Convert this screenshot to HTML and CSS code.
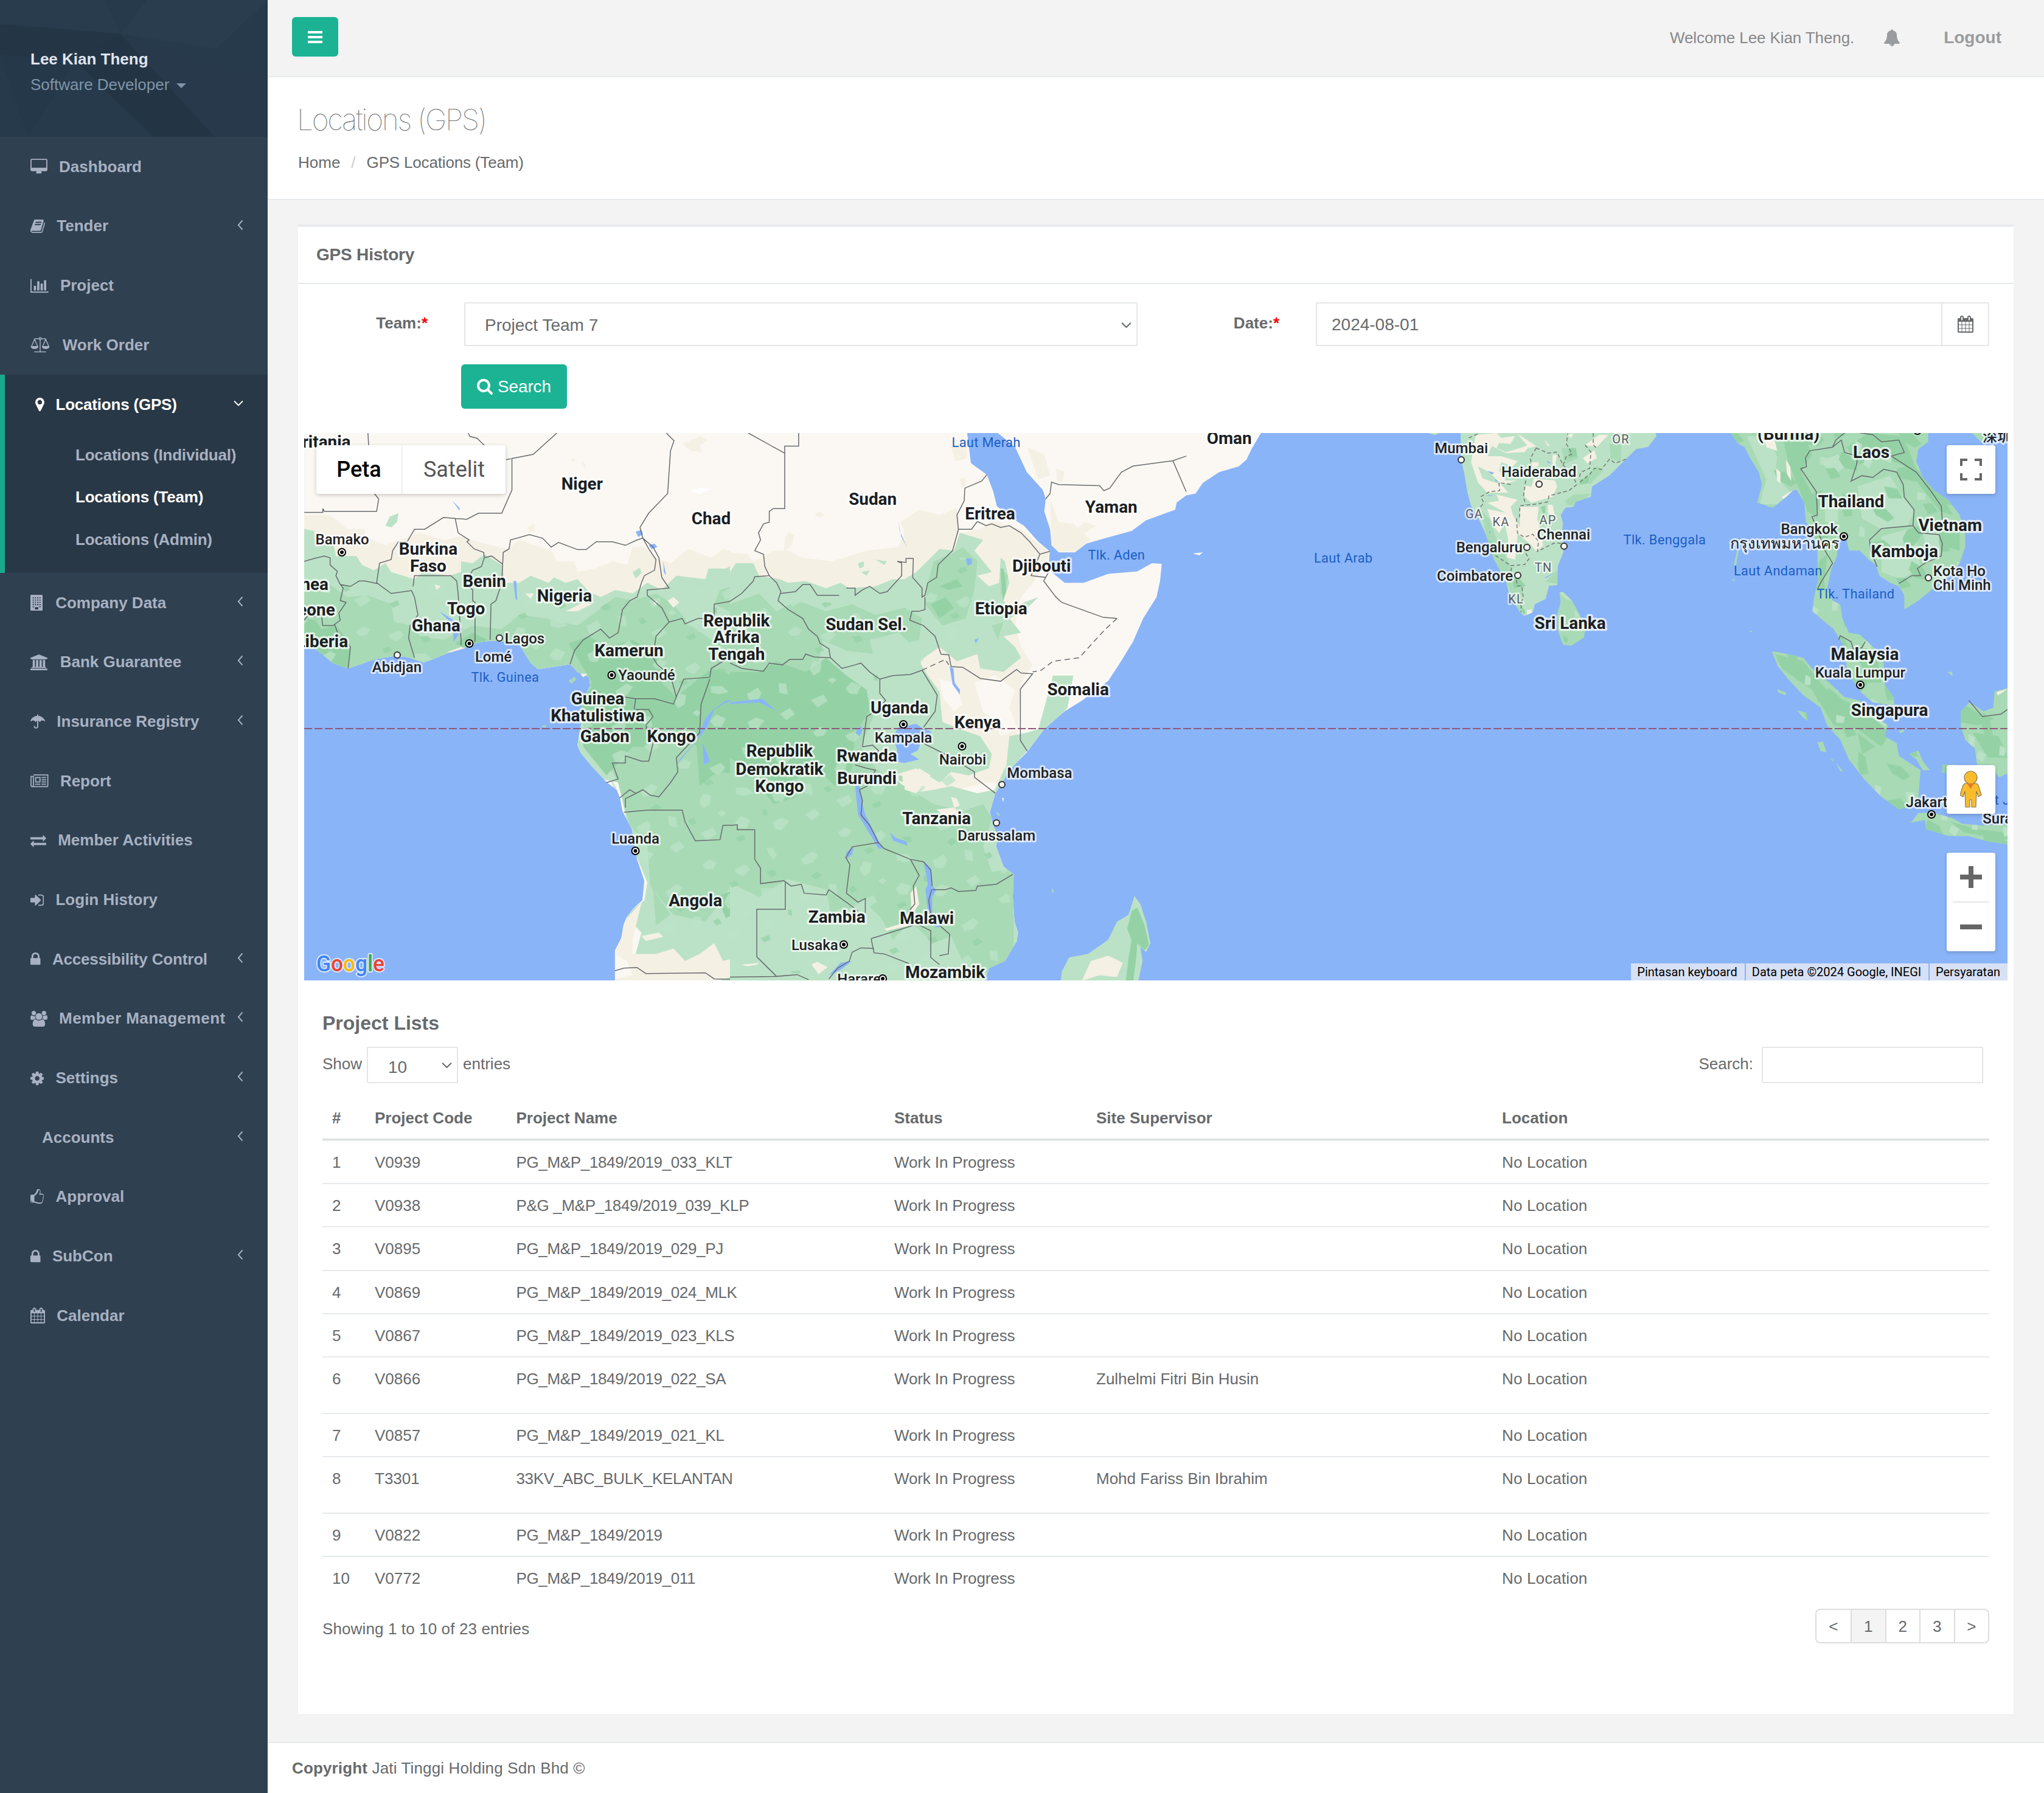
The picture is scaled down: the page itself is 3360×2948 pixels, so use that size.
FILE: index.html
```html
<!DOCTYPE html>
<html lang="en">
<head>
<meta charset="utf-8">
<title>Locations (GPS)</title>
<link rel="stylesheet" href="styles.css">
</head>
<body>
<svg class="defs" width="0" height="0" aria-hidden="true">
  <symbol id="i-lock" viewBox="320 0 1152 1792"><path d="M640 768h512v-192q0-106-75-181t-181-75-181 75-75 181v192zm832 96v576q0 40-28 68t-68 28h-960q-40 0-68-28t-28-68v-576q0-40 28-68t68-28h32v-192q0-184 132-316t316-132 316 132 132 316v192h32q40 0 68 28t28 68z"/></symbol>
  <symbol id="i-calendar" viewBox="64 0 1664 1792"><path d="M192 1664h288v-288h-288v288zm352 0h320v-288h-320v288zm-352-352h288v-320h-288v320zm352 0h320v-320h-320v320zm-352-384h288v-288h-288v288zm736 736h320v-288h-320v288zm-384-736h320v-288h-320v288zm768 736h288v-288h-288v288zm-384-352h320v-320h-320v320zm-352-864v-288q0-13-9.500-22.500t-22.500-9.500h-64q-13 0-22.500 9.500t-9.500 22.500v288q0 13 9.500 22.500t22.500 9.500h64q13 0 22.500-9.500t9.500-22.500zm736 864h288v-320h-288v320zm-384-384h320v-288h-320v288zm384 0h288v-288h-288v288zm32-480v-288q0-13-9.500-22.500t-22.500-9.500h-64q-13 0-22.500 9.500t-9.500 22.500v288q0 13 9.500 22.500t22.500 9.500h64q13 0 22.500-9.500t9.500-22.500zm384-64v1280q0 52-38 90t-90 38h-1408q-52 0-90-38t-38-90v-1280q0-52 38-90t90-38h128v-96q0-66 47-113t113-47h64q66 0 113 47t47 113v96h384v-96q0-66 47-113t113-47h64q66 0 113 47t47 113v96h128q52 0 90 38t38 90z"/></symbol>
  <symbol id="i-left" viewBox="0 0 10 18"><path d="M8.500 1.500L1.800 9l6.700 7.500" fill="none" stroke="currentColor" stroke-width="1.900"/></symbol>
  <symbol id="i-down" viewBox="0 0 18 11"><path d="M1.200 1.500L9 9.300l7.800-7.800" fill="none" stroke="currentColor" stroke-width="2.200"/></symbol>
</svg>
<aside class="sidebar">
  <div class="profile">
    <svg class="profile-bg" viewBox="0 0 767 504" preserveAspectRatio="none">
      <path fill="#263a4b" d="M0 0h767v504H0z"/>
      <path fill="#283c4e" d="M0 0h300l45 125L0 85z"/><path fill="#293d4f" d="M420 0h347L620 180 345 125z"/>
      <path fill="#243646" d="M0 90l345 35-130 100L0 200z"/><path fill="#233545" d="M345 125l270 379H440L215 225z"/>
      <path fill="#27394b" d="M345 125l380 150 42-60v289h-50L615 504z"/><path fill="#25384a" d="M0 200l215 25L80 504z"/>
    </svg>
    <div class="profile-name">Lee Kian Theng</div>
    <div class="profile-role">Software Developer <i class="caret"></i></div>
  </div>
  <nav class="menu">
    <a class="item"><svg class="w28" viewBox="0 0 1920 1792"><path d="M1792 992v-832q0-13-9.500-22.500t-22.500-9.500h-1600q-13 0-22.500 9.500t-9.500 22.500v832q0 13 9.500 22.500t22.500 9.500h1600q13 0 22.500-9.500t9.500-22.500zm128-832v1088q0 66-47 113t-113 47h-544q0 37 16 77.500t32 71 16 43.500q0 26-19 45t-45 19h-512q-26 0-45-19t-19-45q0-14 16-44t32-70 16-78h-544q-66 0-113-47t-47-113v-1088q0-66 47-113t113-47h1600q66 0 113 47t47 113z"/></svg>Dashboard</a>
    <a class="item"><svg class="w24" viewBox="64 0 1664 1792"><path d="M1703 478q40 57 18 129l-275 906q-19 64-76.500 107.500t-122.500 43.500h-923q-77 0-148.500-53.500t-99.500-131.500q-24-67-2-127 0-4 3-27t4-37q1-8-3-21.500t-3-19.500q2-11 8-21t16.500-23.500 16.500-23.500q23-38 45-91.500t30-91.500q3-10 .5-30t-.5-28q3-11 17-28t17-23q21-36 42-92t25-90q1-9-2.500-32t.5-28q4-13 22-30.500t22-22.500q19-26 42.500-84.500t27.500-96.500q1-8-3-25.500t-2-26.500q2-8 9-18t18-23 17-21q8-12 16.500-30.500t15-35 16-36 19.500-32 26.500-23.500 36-11.500 47.500 5.500l-1 3q38-9 51-9h761q74 0 114 56t18 130l-274 906q-36 119-71.500 153.500t-128.500 34.500h-869q-27 0-38 15-11 16-1 43 24 70 144 70h923q29 0 56-15.500t35-41.500l300-987q7-22 5-57 38 15 59 43zm-1064 2q-4 13 2 22.500t20 9.500h608q13 0 25.500-9.500t16.500-22.500l21-64q4-13-2-22.500t-20-9.500h-608q-13 0-25.500 9.500t-16.500 22.500zm-83 256q-4 13 2 22.500t20 9.500h608q13 0 25.500-9.500t16.500-22.500l21-64q4-13-2-22.500t-20-9.500h-608q-13 0-25.500 9.500t-16.500 22.500z"/></svg>Tender<svg class="chev"><use href="#i-left"/></svg></a>
    <a class="item"><svg class="w30" viewBox="0 0 2048 1792"><path d="M640 896v512h-256v-512h256zm384-512v1024h-256v-1024h256zm1024 1152v128h-2048v-1536h128v1408h1920zm-640-896v768h-256v-768h256zm384-384v1152h-256v-1152h256z"/></svg>Project</a>
    <a class="item"><svg class="w32 gap2" viewBox="0 0 32 27"><g fill="none" stroke="currentColor" stroke-width="1.500"><path d="M16 3v22M6 25.500h20M6 3.200h8M18 3.200h8M6.500 4L1.500 15.500M6.500 4l5 11.500M25.500 4l-5 11.500M25.500 4l5 11.500"/><circle cx="16" cy="2.800" r="1.800"/></g><path d="M0 15.500h13c0 3.500-3 5-6.500 5S0 19 0 15.500zM19 15.500h13c0 3.500-3 5-6.500 5s-6.500-1.500-6.500-5z"/></svg>Work Order</a>
    <div class="active">
      <a class="item"><svg class="w15" viewBox="384 0 1024 1792"><path d="M1152 640q0-106-75-181t-181-75-181 75-75 181 75 181 181 75 181-75 75-181zm256 0q0 109-33 179l-364 774q-16 33-47.500 52t-67.500 19-67.500-19-46.500-52l-365-774q-33-70-33-179 0-212 150-362t362-150 362 150 150 362z"/></svg>Locations (GPS)<svg class="chev-down"><use href="#i-down"/></svg></a>
      <a class="sub">Locations (Individual)</a>
      <a class="sub on">Locations (Team)</a>
      <a class="sub">Locations (Admin)</a>
    </div>
    <a class="item"><svg class="w20 gap2" viewBox="0 0 20.500 26"><path fill-rule="evenodd" d="M1 0h18.500a1 1 0 0 1 1 1v24a1 1 0 0 1-1 1H1a1 1 0 0 1-1-1V1a1 1 0 0 1 1-1zM3.700 4v1.800h2V4zm3.700 0v1.800h2V4zm3.700 0v1.800h2V4zm3.700 0v1.800h2V4zM3.700 7.700v1.800h2V7.700zm3.700 0v1.800h2V7.700zm3.700 0v1.800h2V7.700zm3.700 0v1.800h2V7.700zM3.700 11.400v1.800h2v-1.800zm3.700 0v1.800h2v-1.800zm3.700 0v1.800h2v-1.800zm3.700 0v1.800h2v-1.800zM3.700 15.100v1.800h2v-1.800zm3.700 0v1.800h2v-1.800zm3.700 0v1.800h2v-1.800zm3.700 0v1.800h2v-1.800zM3.700 18.800v1.800h2v-1.800zm11.100 0v1.800h2v-1.800zM7.400 20.300V24h5.700v-3.700z"/></svg>Company Data<svg class="chev"><use href="#i-left"/></svg></a>
    <a class="item"><svg class="w28 gap2" viewBox="0 0 1920 1792"><path d="M960 0l960 384v128h-128q0 26-20.500 45t-48.500 19h-1526q-28 0-48.500-19t-20.500-45h-128v-128zm-704 640h256v768h128v-768h256v768h128v-768h256v768h128v-768h256v768h59q28 0 48.500 19t20.500 45v64h-1664v-64q0-26 20.500-45t48.500-19h59v-768zm1595 960q28 0 48.500 19t20.500 45v128h-1920v-128q0-26 20.500-45t48.500-19h1782z"/></svg>Bank Guarantee<svg class="chev"><use href="#i-left"/></svg></a>
    <a class="item"><svg class="w24" viewBox="0 0 24 26"><path d="M11 4V2.500a1 1 0 0 1 2 0V4c5.500.4 9.800 4 11 8.600.1.500-.4.800-.8.400-2.800-2.400-5.300-2-7.200.8-.3.400-.7.400-1 0-.6-.9-1.300-1.600-2.100-1.900V21a3.700 3.700 0 0 1-7.400.3c0-1.300 1.800-1.300 1.900 0a1.800 1.800 0 0 0 3.600-.3v-9.100c-.8.300-1.500 1-2.100 1.900-.3.400-.7.400-1 0C6 11 3.600 10.600.8 13c-.4.400-.9.100-.8-.4C1.200 8 5.500 4.400 11 4z"/></svg>Insurance Registry<svg class="chev"><use href="#i-left"/></svg></a>
    <a class="item"><svg class="w30" viewBox="0 0 30 26"><g fill="none" stroke="currentColor" stroke-width="1.800"><path d="M5 3h23.900v17.500a2 2 0 0 1-2 2H3a2 2 0 0 1-2-2V5.500h4v15a2 2 0 0 1-2 2"/><path d="M8.700 7.400h7.200v7.200H8.700z"/><path d="M18.500 7.400H26M18.500 11H26M18.500 14.600H26M7.800 18.500h8.800M18.500 18.500H26"/></g></svg>Report</a>
    <a class="item"><svg class="w26" viewBox="0 0 1792 1792"><path d="M1792 1184v192q0 13-9.500 22.500t-22.500 9.500h-1376v192q0 13-9.500 22.500t-22.500 9.500q-12 0-24-10l-319-320q-9-9-9-22 0-14 9-23l320-320q9-9 23-9 13 0 22.500 9.500t9.500 22.500v192h1376q13 0 22.500 9.500t9.500 22.500zm0-544q0 14-9 23l-320 320q-9 9-23 9-13 0-22.500-9.500t-9.500-22.500v-192h-1376q-13 0-22.500-9.500t-9.500-22.500v-192q0-13 9.500-22.500t22.500-9.500h1376v-192q0-14 9-23t23-9q12 0 24 10l319 319q9 9 9 23z"/></svg>Member Activities</a>
    <a class="item"><svg class="w22" viewBox="128 0 1536 1792"><path d="M1312 896q0 26-19 45l-544 544q-19 19-45 19t-45-19-19-45v-288h-448q-26 0-45-19t-19-45v-384q0-26 19-45t45-19h448v-288q0-26 19-45t45-19 45 19l544 544q19 19 19 45zm352-352v704q0 119-84.500 203.500t-203.500 84.500h-320q-13 0-22.500-9.500t-9.500-22.500q0-4-1-20t-.5-26.500 3-23.500 10-19.500 20.500-6.500h320q66 0 113-47t47-113v-704q0-66-47-113t-113-47h-312l-11.500-1-11.500-3-8-5.500-7-9-2-13.500q0-4-1-20t-.5-26.500 3-23.500 10-19.500 20.500-6.500h320q119 0 203.500 84.500t84.500 203.500z"/></svg>Login History</a>
    <a class="item"><svg class="w17"><use href="#i-lock"/></svg><span class="snug">Accessibility Control</span><svg class="chev"><use href="#i-left"/></svg></a>
    <a class="item"><svg class="w28" viewBox="0 0 1920 1792"><path d="M593 896q-162 5-265 128h-134q-82 0-138-40.500t-56-118.500q0-353 124-353 6 0 43.500 21t97.500 42.500 119 21.500q67 0 133-23-5 37-5 66 0 159 93 293zm1071 637q0 120-73 189.500t-194 69.500h-874q-121 0-194-69.500t-73-189.500q0-53 3.500-103.500t14-109 26.500-108.500 43-97.500 62-81 85.500-53.500 111.500-20q10 0 43 21.500t73 48 107 48 135 21.500 135-21.500 107-48 73-48 43-21.500q61 0 111.500 20t85.500 53.500 62 81 43 97.500 26.500 108.500 14 109 3.500 103.500zm-1024-1277q0 106-75 181t-181 75-181-75-75-181 75-181 181-75 181 75 75 181zm704 384q0 159-112.500 271.500t-271.500 112.500-271.500-112.500-112.500-271.500 112.500-271.500 271.500-112.500 271.500 112.500 112.500 271.500zm576 225q0 78-56 118.500t-138 40.500h-134q-103-123-265-128 93-134 93-293 0-29-5-66 66 23 133 23 59 0 119-21.500t97.500-42.500 43.500-21q124 0 124 353zm-128-609q0 106-75 181t-181 75-181-75-75-181 75-181 181-75 181 75 75 181z"/></svg><span class="roomy">Member Management</span><svg class="chev"><use href="#i-left"/></svg></a>
    <a class="item"><svg class="w22" viewBox="128 0 1536 1792"><path d="M1152 896q0-106-75-181t-181-75-181 75-75 181 75 181 181 75 181-75 75-181zm512-109v222q0 12-8 23t-20 13l-185 28q-19 54-39 91 35 50 107 138 10 12 10 25t-9 23q-27 37-99 108t-94 71q-12 0-26-9l-138-108q-44 23-91 38-16 136-29 186-7 28-36 28h-222q-14 0-24.500-8.500t-11.500-21.500l-28-184q-49-16-90-37l-141 107q-10 9-25 9-14 0-25-11-126-114-165-168-7-10-7-23 0-12 8-23 15-21 51-66.500t54-70.500q-27-50-41-99l-183-27q-13-2-21-12.500t-8-23.500v-222q0-12 8-23t19-13l186-28q14-46 39-92-40-57-107-138-10-12-10-24 0-10 9-23 26-36 98.500-107.500t94.500-71.500q13 0 26 10l138 107q44-23 91-38 16-136 29-186 7-28 36-28h222q14 0 24.500 8.500t11.500 21.500l28 184q49 16 90 37l142-107q9-9 24-9 13 0 25 10 129 119 165 170 7 8 7 22 0 12-8 23-15 21-51 66.500t-54 70.500q26 50 41 98l183 28q13 2 21 12.500t8 23.500z"/></svg>Settings<svg class="chev"><use href="#i-left"/></svg></a>
    <a class="item noicon">Accounts<svg class="chev"><use href="#i-left"/></svg></a>
    <a class="item"><svg class="w22" viewBox="128 0 1536 1792"><path transform="translate(64)" d="M256 1408q0-26-19-45t-45-19-45 19-19 45 19 45 45 19 45-19 19-45zm1280-640q0-51-39-89.500t-89-38.500h-352q0-58 48-159.500t48-160.500q0-98-32-145t-128-47q-26 26-38 85t-30.500 125.500-59.500 109.500q-22 23-77 91-4 5-23 30t-31.500 41-34.500 42.500-40 44-38.500 35.500-40 27-35.500 9h-32v640h32q13 0 31.500 3t33 6.500 38 11 35 11.500 35.500 12.500 29 10.500q211 73 342 73h121q192 0 192-167 0-26-5-56 30-16 47.500-52.500t17.500-73.500-18-69q53-50 53-119 0-25-10-55.500t-25-47.500q32-1 53.500-47t21.500-81zm64-1q0 89-49 163 9 33 9 69 0 77-38 144 3 21 3 43 0 101-60 178 1 139-85 219.500t-227 80.500h-129q-96 0-189.500-22.500t-216.500-65.500q-116-40-138-40h-288q-53 0-90.500-37.500t-37.500-90.500v-640q0-53 37.500-90.500t90.500-37.500h274q36-24 137-155 58-75 107-128 24-25 35.500-85.500t30.500-126.500 62-108q39-37 90-37 84 0 151 32.500t102 101.500 35 186q0 93-48 192h176q104 0 180 76t76 179z"/></svg>Approval</a>
    <a class="item"><svg class="w17"><use href="#i-lock"/></svg>SubCon<svg class="chev"><use href="#i-left"/></svg></a>
    <a class="item"><svg class="w24"><use href="#i-calendar"/></svg>Calendar</a>
  </nav>
</aside>
<main class="page">
  <header class="topbar">
    <button class="toggle"><svg width="24" height="20"><path d="M0 0h24v4H0zM0 8h24v4H0zM0 16h24v4H0z"/></svg></button>
    <span class="welcome">Welcome Lee Kian Theng.</span>
    <svg class="bell" viewBox="64 0 1664 1792"><path d="M912 1696q0-16-16-16-59 0-101.500-42.500t-42.500-101.500q0-16-16-16t-16 16q0 73 51.500 124.500t124.500 51.500q16 0 16-16zm816-288q0 52-38 90t-90 38h-448q0 106-75 181t-181 75-181-75-75-181h-448q-52 0-90-38t-38-90q50-42 91-88t85-119.500 74.500-158.500 50-206 19.500-260q0-152 117-282.500t307-158.500q-8-19-8-39 0-40 28-68t68-28 68 28 28 68q0 20-8 39 190 28 307 158.500t117 282.500q0 139 19.500 260t50 206 74.500 158.500 85 119.500 91 88z"/></svg>
    <a class="logout">Logout</a>
  </header>
  <section class="heading">
    <h2>Locations (GPS)</h2>
    <div class="crumbs"><span>Home</span><i>/</i><span class="snug">GPS Locations (Team)</span></div>
  </section>
  <section class="content">
    <div class="card">
      <h5>GPS History</h5>
      <div class="card-body">
        <div class="form">
          <label>Team:<b>*</b></label>
          <div class="select"><span>Project Team 7</span><svg class="arrow"><use href="#i-down"/></svg></div>
          <label>Date:<b>*</b></label>
          <div class="date"><span>2024-08-01</span><i><svg><use href="#i-calendar"/></svg></i></div>
        </div>
        <button class="search"><svg viewBox="64 128 1664 1664"><path d="M1216 832q0-185-131.500-316.500t-316.500-131.500-316.500 131.500-131.500 316.500 131.500 316.500 316.500 131.500 316.500-131.500 131.500-316.500zm512 832q0 52-38 90t-90 38q-54 0-90-38l-343-342q-179 124-399 124-143 0-273.500-55.500t-225-150-150-225-55.500-273.500 55.500-273.500 150-225 225-150 273.500-55.500 273.500 55.500 225 150 150 225 55.500 273.500q0 220-124 399l343 343q37 37 37 90z"/></svg>Search</button>
        <div class="map">
          <svg class="canvas" width="2800" height="900" viewBox="0 0 2800 900">
            <defs>
              <pattern id="tex" width="230" height="170" patternUnits="userSpaceOnUse" patternTransform="rotate(-14)">
                <g fill="#bbe2c6" opacity=".75"><path d="M10 12l14-6 10 8-8 8-12-2zM60 30l20-4 6 10-14 8-8-6zM120 8l10 2 4 14-8 6-4-10zM170 40l22-8 8 8-12 10-14 0zM30 80l10-12 12 6-6 14-12 4zM95 70l18 4 8 12-16 0-12-6zM150 95l20-6 4 10-10 12-12-4zM205 90l12 4-2 18-12-6zM20 130l22-4 4 12-18 6zM80 125l12-8 14 10-10 12-12-4zM140 140l16-4 12 8-16 12-10-4zM195 140l18-6 6 12-16 6zM55 105l8-3 6 6-8 4z"/></g>
                <g fill="#94d2a5" opacity=".7"><path d="M45 50l12-2 4 8-12 2zM110 45l14 2 2 8-10 2zM180 70l12-4 6 8-12 4zM75 150l14-2 2 8-12 2zM5 105l10-2 3 9-9 2zM130 115l6 2-2 10-6-4z"/></g>
              </pattern>
              <pattern id="tex2" width="170" height="130" patternUnits="userSpaceOnUse" patternTransform="rotate(20)">
                <g fill="#94d2a5"><path d="M10 12l24-4 20 10-8 10-22-4zM80 30l16-14 10 12-6 22-14 8-8-14zM130 8l14 6 14 24-12 6-10-14zM30 70l20-12 22 8-6 14-28 4zM105 75l22 4 14 16-22 4-14-10zM20 105l22-4 14 12-22 8zM90 110l14-6 14 10-14 10z"/></g>
                <g fill="#bbe2c6"><path d="M55 45l14-4 4 10-10 8zM120 50l12 2 4 14-10 2zM75 95l14-2 2 10-12 4zM5 50l10 2 3 12-9 2zM145 70l14 2-2 14-12-4z"/></g>
              </pattern>
              <clipPath id="land6"><path d="M21 20H1568V1568H1089V1470L1111 1435 1118 1400 1130 1376 1155 1350 1183 1330 1190 1275 1165 1215 1147 1130 1115 1080 1107 1045 1095 1020 1062 1000 1010 955 970 915 960 895 972 840 975 770 1004 730 1000 705 960 690 935 668 890 674 825 682 800 665 762 615 720 605 660 602 615 608 590 618 540 628 490 645 432 664 375 648 330 645 260 655 215 668 172 680 120 665 60 625 21 620z"/></clipPath>
              <clipPath id="land7"><path d="M0 20H815L828 105 883 137 905 185 917 225 960 255 1010 280 1060 325 1099 352 1096 385 1105 410 1150 440 1215 440 1300 415 1400 408 1450 385 1484 387 1478 435 1466 480 1420 540 1385 605 1340 665 1300 715 1210 770 1150 800 1080 850 1020 915 960 965 935 1000 912 1030 893 1083 905 1120 920 1150 915 1180 940 1235 975 1257 972 1320 978 1390 990 1420 985 1445 945 1500 890 1520 870 1568H0z"/></clipPath>
              <clipPath id="land8"><path d="M525 36L528 170 540 230 555 330 570 395 600 450 635 540 665 650 720 770 735 830 780 920 800 938 835 920 845 880 890 855 905 790 940 787 943 690 965 630 970 600 960 540 965 480 955 440 975 405 1010 400 1020 375 1085 350 1090 300 1165 245 1235 165 1280 115 1330 105 1367 50 1362 36z"/></clipPath>
              <clipPath id="land9"><path d="M265 20L300 50 330 60 355 90 395 130 410 165 388 215 460 230 520 200 555 180 570 180 605 215 612 270 640 290 665 350 668 430 650 480 642 520 700 550 740 570 790 620 800 680 830 715 870 750 920 775 1020 785 1015 760 975 725 970 660 930 625 860 585 810 580 780 540 770 500 735 490 710 455 730 400 755 365 760 320 800 320 810 350 860 350 900 375 935 390 950 420 1000 440 1040 450 1065 475 1065 515 1130 490 1190 460 1260 425 1320 385 1345 340 1345 300 1320 250 1270 210 1200 180 1150 145 1120 100 1130 65 1175 45 1175 20zM455 632L500 636 600 650 640 680 720 720 790 760 860 770 920 810 990 840 975 870 1030 890 1040 925 1140 965 1130 1040 1100 1065 1040 1075 960 1040 880 990 810 935 770 880 710 840 680 790 600 755 530 710 480 670zM1095 1112L1130 1085 1200 1085 1290 1100 1330 1115 1420 1120 1540 1118V1173L1450 1165 1360 1150 1270 1150 1165 1130 1160 1105zM1540 735L1480 745 1475 790 1430 800 1365 775 1325 800 1325 840 1345 880 1390 905 1400 950 1460 950 1500 985 1540 975zM1088 920L1130 910 1150 940 1183 965 1150 965 1120 935zM1240 950h60v22h-60zM480 738L523 748 515 755 485 747zM572 797L615 805 620 827 595 815zM665 887L690 885 707 915 680 912zM752 945L782 968 770 968zM1375 20L1475 20 1420 46zM295 350L303 350 290 392 280 390zM270 432l12-4v8zM1265 690l20 0 2 12zM1040 855l22-5 2 8-20 3zM350 573l18 4-10 2zM725 930l16 8-8 2z"/></clipPath>
              <g id="cap"><circle r="6" fill="#fff" stroke="#000" stroke-width="2"/><circle r="3" fill="#000"/></g>
              <circle id="town" r="5" fill="#f4f4f4" stroke="#333" stroke-width="2"/>
            </defs>
            <rect width="2800" height="900" fill="#8ab4f8"/>
            <g transform="translate(-10 -12) scale(.47831 .58675)" class="lines">
              <g clip-path="url(#land6)">
                <path fill="#fbf8f3" d="M0 0h1600v1600H0z"/>
                <path fill="#f5f0e4" d="M0 250L110 250 170 290 230 290 230 310 300 335 420 300 500 320 560 310 640 330 720 345 760 320 870 350 890 380 950 380 960 410 1020 400 1080 380 1130 390 1150 340 1190 340 1230 370 1280 385 1340 345 1420 370 1460 345 1530 360 1568 350V700H0zM1320 50l60-20 30 10-30 15 10 20-40-5zM935 92l20 2-10 8zM975 100l15 10-5 12zM790 285l20-10 5 20-20 5z"/>
                <path fill="#bbe2c6" d="M0 285L55 295 60 340 120 325 130 365 200 365 220 390 260 405 300 385 320 410 400 430 430 410 520 420 560 410 560 380 600 385 640 360 700 390 710 440 760 440 800 420 860 440 880 425 920 440 960 430 1000 465 1040 480 1090 460 1150 470 1200 440 1250 460 1300 420 1400 430 1410 400 1470 400 1500 385 1568 380V1600H1150L1160 1480 1180 1420 1120 1370 1190 1330 1200 1280 1150 1180 1100 1000 0 800zM300 280l15-25 30-10-5 25-20 15zM1150 410l25-12 5 15-20 15z"/>
                <path fill="#a8dab5" d="M0 460L100 440 170 480 240 475 320 500 330 550 390 560 420 590 500 600 600 560 700 570 760 530 850 540 960 560 1010 530 1090 480 1150 490 1230 470 1290 500 1350 560 1420 600 1568 620V1330L1480 1300 1400 1390 1290 1370 1210 1290 1200 1170 1140 1120 1100 1000 900 700 0 700z"/>
                <path fill="#a8dab5" d="M1568 430L1450 460 1430 500 1480 520 1568 490zM1220 1300l60 70-50 30zM1500 1390l68-20v70l-60-10z"/>
                <path fill="#94d2a5" d="M0 535L60 545 80 570 130 560 180 610 170 680 0 640zM930 610L1000 590 1060 620 1150 600 1230 640 1250 720 1300 760 1420 680 1568 720V980L1440 970 1380 1010 1370 900 1310 850 1220 850 1190 900 1150 900 1060 980 980 900 980 740 1010 720zM1440 1320l60-20 20 60-50 20zM540 610l60-30 50 20-60 30z"/>
                <path fill="url(#tex)" transform="scale(2.090 1.704)" d="M0 262L180 262 310 252 560 290 750 250V860L600 840 570 720 480 500 0 420z"/>
                <path fill="#f5f0e4" d="M780 470l30 0-10 15zM830 485l20 5-25 8zM920 520l60-25 30 5-50 20zM1270 490l20-10 20 15-20 15zM1220 490l15 2-8 12zM470 445l20 5-15 10zM1150 1480L1230 1480 1290 1465 1330 1500 1380 1480 1430 1450 1460 1500 1560 1480 1540 1530 1400 1568H1090L1095 1470 1130 1380 1185 1330 1190 1275 1165 1215 1180 1240 1195 1290 1170 1370 1150 1440zM1180 1430l60-10 15 12-60 12z"/>
                <path fill="#fbf8f3" d="M1090 1480l40 20 20 40-60 10z"/><path fill="#fff" d="M1345 182l40-8 35 4-40 12z"/>
              </g>
              <path fill="#f5f0e4" d="M510 635l50-15 15 3-50 12zM970 695l25 0-15 10z"/><path fill="#a8dab5" d="M930 715l20-12 5 8-15 12zM835 842l15-4v8z"/>
              <path fill="#8ab4f8" d="M1160 297l20-5 5 12-15 8zM1205 335l20-5 10 10-20 6zM740 435l10 0 3 55-6-5zM1370 880l30-60 20-20 50-30 98-12-98 18-40 20-25 50-90 90-15 10zM485 520l40 20 40 30-30 35-5-50zM1390 890l15 25 10 25-20 10zM530 210l25 20v8zM1255 380l10 40-8-10z"/>
              <path class="bd" d="M240 20L245 90M585 20L590 30 615 35 640 55M715 95L808 80 890 20M735 90V180L700 245 620 245 580 262 540 260M21 243H85V232L90 240H270L277 205 262 190M1265 20L1292 42 1280 70 1270 190 1205 245 1175 285 1185 315 1165 320 1125 335 1080 325 1025 325 990 347 960 347 895 327 870 340 840 315 795 305 730 320 725 345 705 355 703 388 665 365 640 370 638 355 605 345 580 325 588 320 550 300 540 260 500 257 435 290 400 290 375 325 345 325 325 350 320 375 280 385 270 440 320 470 390 462 400 480 412 530 385 560 380 595 400 650M21 380L55 372 90 365 110 370 110 390 135 408 130 420 145 445 180 450 210 435 230 435 270 442M145 445L155 455 145 490 165 495 140 525 145 545 120 560 85 560 80 530 55 535 50 515 21 545M125 555L140 590 180 620 172 680M395 450L400 420 525 420 545 435 550 470 560 600 560 615M640 370L630 395 600 405 575 440 600 460 600 490 608 495 608 605M703 388L700 440 680 490 663 500 660 600M1185 315L1205 345 1230 375 1225 405 1190 420 1180 440 1165 480 1140 490 1115 515 1100 580 1070 595 1040 570 980 600 950 630 935 668M1185 315L1220 340 1240 370 1250 425 1275 455 1200 460 1200 475 1250 510 1275 550 1230 590 1220 650 1235 670 1280 700 1300 760M1275 550L1320 540 1330 555 1375 540 1430 540 1430 500 1500 490 1568 430M1300 760L1325 710 1415 705 1420 680 1500 640 1568 655M1300 760L1290 780 1225 765 1160 765 1155 795M1160 765L1120 760M1415 710L1385 780 1380 860 1300 930 1305 970 1280 1000 1240 1040 1210 1035 1185 1020 1150 1035 1125 1045 1125 1070M1160 795L1205 795 1220 815 1195 840 1220 890 1205 940 1180 940 1125 925 1125 945 1080 945 1100 990 1060 1000M1105 1043L1140 1020 1160 1030M1120 1083L1200 1077 1320 1077 1330 1110 1365 1163 1450 1160 1460 1120 1510 1118 1510 1130 1568 1132M1089 1527L1120 1520 1165 1518 1195 1535 1400 1533 1430 1550 1568 1552"/>
            </g>
            <g transform="translate(700 -12) scale(.47831 .58675)" class="lines">
              <g clip-path="url(#land7)">
                <path fill="#fbf8f3" d="M0 0h1600v1600H0z"/>
                <path fill="#f5f0e4" d="M0 355L60 360 80 380 150 350 200 350 250 370 350 380 470 350 580 340 600 300 585 270 650 235 720 250 780 230 790 300 860 290 900 265 1000 290 1060 330 1100 355 1060 420 1000 480 980 560 1000 620 1040 670 1000 720 990 850 960 940 930 1000 880 1000 780 1020 640 1040 560 980 600 930 640 700 640 500 0 500zM290 250l20-10 15 12-15 5zM190 310l15-12 15 10-10 30-25 15zM790 150l20-5 0 25-15 0zM760 60l50-20 5 50-40 10z"/>
                <path fill="#fbf8f3" d="M990 540L1040 480 1100 440 1200 520 1330 540 1230 650 1110 660 1060 690 1020 640zM840 720L910 700 980 740 960 790 990 850 930 870 900 820 870 800zM720 710l50 10 30 60-30 20-40-40zM560 430l30 0 30 20-40 10z"/>
                <path fill="#bbe2c6" d="M0 410L20 385 80 385 100 420 170 430 200 440 260 435 330 455 380 440 410 455 500 450 560 430 600 430 640 410 690 370 720 345 770 350 790 300 870 320 840 350 860 370 900 410 850 420 890 450 925 440 930 370 945 380 960 440 940 490 960 510 1060 480 1010 520 960 540 1000 580 940 590 980 620 1000 650 940 690 860 680 850 640 780 660 720 620 650 660 680 700 720 745 730 830 790 850 860 870 900 920 890 960 820 980 760 970 720 1000 640 960 560 980 620 1030 700 1020 760 1010 850 1030 910 1020 950 950 960 870 1020 860 1060 850 1110 700 1180 700 1160 790 1000 930 930 1010 1010 1230V1600H0zM440 385l20-5 0 15-15 5zM500 375l40 5-10 10zM450 410l30-5-10 15z"/>
                <path fill="#a8dab5" d="M0 500L100 470 160 520 230 490 330 520 420 500 500 530 600 510 660 540 650 600 560 620 500 640 400 630 320 600 300 680 400 720 460 740 500 800 450 900 500 960 620 1020 700 1060 800 1080 870 1060 900 1100 870 1180 900 1250 975 1240V1520L820 1540 760 1430 700 1450 620 1390 560 1440 520 1380 460 1330 350 1380 330 1300 200 1270 100 1320 0 1280zM680 440L700 380 760 360 800 340 850 380 840 460 810 540 730 560 670 500zM900 560l40-10-20 50zM930 400l25 20-15 60-10-10z"/>
                <path fill="#94d2a5" d="M0 690L100 690 160 660 260 690 330 650 400 700 470 740 480 800 430 860 420 960 360 1010 300 960 200 1000 120 990 0 930zM690 500l50-20 30 30-50 30zM120 1030l60-20 50 30-80 20zM930 400l10 0 10 60-12 30zM720 450l60-20 20 20-50 10zM320 850l90-60 30 20-40 60z"/>
                <path fill="url(#tex)" transform="scale(2.090 1.704)" d="M0 280L300 300 370 215 400 220 390 330 300 400 330 480 370 560 410 640 460 740V900H0z"/>
                <path fill="#f5f0e4" d="M600 1000L650 960 690 980 640 1030 600 1020zM760 1040l20 5 10 20-20 5zM620 1310l20-20 10 50-25 30zM530 1410l80-20 10 10-80 15zM280 1510l20-8 35 15-30 20zM710 1075l60-5 20 15-60 8zM40 1510l60-5-20 15z"/>
                <path fill="#bbe2c6" d="M480 600l100-20 80 60-10 60-150-30zM20 1520l150-20 60 68H0zM510 720l150-30 20 60-60 60-100 0zM1010 880l40-10-60 60z"/>
              </g>
              <path fill="#fbf8f3" d="M920 20L980 60 1020 130 1075 180 1085 205 1080 240 1100 290 1105 335 1130 355 1185 355 1225 330 1290 315 1380 295 1430 265 1530 235 1535 215 1568 195 1600 190 1625 160 1681 130 1748 114 1775 95 1792 66 1825 20z"/>
              <path fill="#f5f0e4" d="M1100 205L1130 270 1180 275 1240 320 1185 352 1130 352 1105 335zM1190 290l30-20 40 10-40 20zM1020 60l60 20 20 60-40 10zM1120 120l30 10-10 30-15-5z"/>
              <path fill="#fbf8f3" d="M1590 358l35-3-12 8zM935 1042l6 2-2 12z"/>
              <path fill="#a8dab5" d="M915 1080l12 10-5 5zM1105 1305l5-10 3 15z"/>
              <path fill="#bbe2c6" d="M1390 1318L1410 1340 1430 1390 1445 1450 1430 1475 1410 1460 1418 1500 1400 1568H1135L1140 1530 1165 1490 1230 1480 1300 1440 1330 1390 1370 1370z"/>
              <path fill="#94d2a5" d="M1380 1360L1400 1350 1425 1400 1440 1455 1425 1470 1400 1450 1395 1500 1385 1560 1360 1560 1370 1490 1380 1440 1365 1410z"/><path fill="#f5f0e4" d="M1240 1500l60-15 50 20-20 40-60-5-60 15z"/>
              <path fill="#8ab4f8" d="M560 870L580 845 640 835 665 850 690 855 690 880 660 880 645 910 620 920 650 935 600 945 560 940 575 910zM755 675L768 680 772 720 790 740 790 753 765 725zM430 1010L445 1005 455 1060 465 1090 490 1130 525 1185 510 1185 470 1130 440 1090zM665 1220L690 1240 695 1290 710 1300 695 1320 695 1380 722 1405 705 1405 680 1360 672 1300 680 1285zM400 1195L425 1180 420 1200 400 1215zM550 1140l20 15 35 10 5 12-50-15zM810 372l20 0 2 15-15 5zM578 265l5 30 25 45-20-30zM0 775l110-10 50 35-60-25-100 5zM430 860l20-20 5 15-10 15zM340 1540L380 1505 420 1500 380 1525zM840 600l15-5-10 15z"/>
              <path class="bd" d="M62 20L188 77M236 20V57H188V232H148L135 240 135 270 115 275 98 300 105 320 85 350 115 360 120 395 135 420 85 423 80 435 40 470 0 492M135 420L160 440 175 465 165 490 200 515 250 540 270 570 300 590 310 610 340 625 345 650 385 680 430 670 450 665 480 690 515 710M175 470L225 465 250 445 275 445 300 475 375 475M400 455H430V475L455 460 480 450 515 470 540 465 590 420 590 385 575 380 605 383 605 372H630L628 425 660 455 660 480 670 475 680 440 710 425 715 390 765 350 785 290 780 250 805 210 807 175 865 155 883 137M785 290L830 290 850 268 880 280 900 275 930 285 960 280 1000 300 1030 325 1065 360 1099 352M1065 360L1035 420 1085 425 1095 410M1085 425L1078 435 1120 480 1140 495 1283 537 1330 540M670 480L670 515 650 520 625 520 618 545 665 560 705 590 725 640 752 642 760 675 800 677 860 708 930 716 985 683 1000 693 1040 695 998 738V882L1022 912M0 665L40 680 115 688 135 665 180 670 205 655 250 655 260 640 290 648 345 650M515 710L560 700 620 697 660 685 690 725 712 755 705 800 665 845M515 710L515 750 535 770 500 800 470 815 455 900M455 900L490 895 510 910 500 930 470 940M665 890L750 925 840 970 840 985 912 1030M430 950L470 960 500 965 470 1010 445 1020M445 1020L455 1050 450 1090 480 1120 510 1168 530 1185 620 1215 665 1222 690 1245 695 1290M510 1168L420 1180 398 1210 412 1230 400 1310 440 1335 465 1325 465 1365M620 1215L650 1260 630 1290 635 1340 615 1360 640 1395 690 1415 690 1490 720 1510M695 1300H740L760 1295 785 1305 845 1302 850 1290 915 1285 972 1257M485 1437L630 1400M485 1437L495 1477 530 1480 615 1507M495 1465L450 1463 420 1475 410 1500 370 1520 340 1550M720 1400L755 1425 750 1480 720 1485M693 1300L683 1330 690 1370M0 1120L25 1118 25 1132 85 1132 85 1215 105 1240 105 1283 185 1275 210 1290 245 1285 255 1310 330 1315 340 1300 400 1335 440 1360M190 1280V1355H92V1488L160 1543 230 1538 270 1552M0 1545L160 1543M1085 205L1100 190 1105 158 1130 165 1270 168 1285 182 1305 175 1345 130 1385 113 1522 98 1568 85M1522 98L1568 185"/>
              <path class="bd dash" d="M1330 540L1290 570 1200 650 1110 660 1070 685 1040 690M660 685L740 655 752 670"/>
            </g>
            <g transform="translate(1700 -12) scale(.38266 .33333)" class="lines">
              <g clip-path="url(#land8)">
                <path fill="#bbe2c6" d="M500 0h900v1000H500z"/>
                <path fill="#f5f0e4" d="M590 45L680 36 700 60 760 50 740 90 690 85 680 110 720 130 780 110 830 90 800 130 720 135 660 100 640 150 700 150 770 175 750 200 700 180 690 220 720 270 770 270 700 290 650 230 600 200 620 260 700 290 730 330 640 330 600 280 585 230 570 180zM800 295L830 300 840 260 930 270 940 300 920 350 830 380 800 350zM780 400L860 400 855 460 880 590 850 620 830 590 770 530 760 660 725 650 730 560 715 480 690 530 660 480 640 410 720 430 640 380 690 370 680 340 770 365 740 400 750 440 780 500zM770 40l80 60-30 10zM885 70l25 30-10 0zM920 145l20 0-10 50-10-10zM1050 160l50-40 10 40-40 25zM1060 95l60-50 40 0-50 60zM810 910l20-4 0 25-20 5zM900 390l20 0 10 50-30-10zM980 45l30-5-10 20zM830 180l30 0 0 20-25 5z"/>
                <path fill="#a8dab5" d="M1165 90L1215 90 1215 180 1170 160zM960 110l60 0 10 50-60 30zM975 370L1010 340 1085 335 1020 395 980 390zM615 420L650 460 680 560 740 690 760 760 800 790 780 860 800 930 780 920 720 770 665 650 635 540zM890 770l50-60 0 70zM1050 260l60-60 30 20-60 70z"/>
                <path fill="#94d2a5" d="M990 110l30 0 5 40-35 10zM1040 265l40-10-10 30-35 5zM870 400l20-5-5 60zM745 740l30 10 30 40-50 10zM785 880l20 40-10 10zM640 560l30 20-10 40z"/>
                <path fill="#8ab4f8" d="M640 222l30 10-10 8zM670 262l20 15-15-3zM895 170l20 15-15-2zM635 343l30 0-15 5zM885 750l50-30-40 30zM650 515l5 20-8-8z"/>
              </g>
              <path fill="#bbe2c6" d="M385 36h50l-20 10z"/>
              <path fill="#a8dab5" d="M950 825L965 820 1005 865 1022 900 1040 940 1062 1000 1055 1045 1000 1085 965 1080 943 1010 940 930 955 870z"/><path fill="#bbe2c6" d="M1015 910l20 20-5 20-15-5zM950 822l15-2 40 45-30-10z"/><path fill="#94d2a5" d="M965 1030l20 20v20l-15-5z"/>
              <path class="st" d="M560 60L600 40M850 110L825 160 830 200M850 110L900 135 940 130 965 195 980 150 1005 140 980 90 985 40M1095 36V95L1110 110M1060 95L1085 130 1080 210 1040 230 1035 265M965 195L1000 230 1025 290 990 320 905 345 900 375 860 385 780 395 778 450 765 460 770 530 800 550 835 535 860 570 855 620 925 580 965 580M1235 165L1190 185 1165 165 1130 215 1100 210 1080 240 1030 285M805 270L795 350 805 390M740 290L690 280 693 320 650 325 612 350 625 380 605 410M675 640L740 690 800 685 820 655 805 630M745 700L740 720M765 760L768 790 788 790 795 850 785 870 785 920"/>
            </g>
            <g transform="translate(2250 -12) scale(.35714 .58675)" class="lines">
              <g clip-path="url(#land9)">
                <path fill="#a8dab5" d="M200 0h1400v1200H200z"/>
                <path fill="#bbe2c6" d="M340 30L450 30 480 90 470 140 550 190 480 220 400 220 430 150zM850 170L1000 140 1060 200 1110 240 1080 280 960 290 870 260zM960 310L1080 290 1120 320 1140 400 1050 430 960 410zM680 100l80-20 40 30-60 30zM700 210l60 0 0 60-60 0zM1150 300l80 0 0 60-60 0z"/>
                <path fill="#94d2a5" d="M500 20L600 20 640 80 590 130 640 190 670 260 620 240 570 160 530 100zM800 60L900 20 1060 30 1120 120 1230 190 1290 250 1230 240 1140 170 1060 110 960 90 850 110zM470 640L600 660 720 750 860 790 1000 860 960 900 850 850 740 840 640 740 500 680zM870 610L940 650 960 720 900 720 860 660zM1380 860L1500 870 1540 930 1450 930zM1240 280l80 10 0 60-60-10zM1280 1110l120 20 140 10v20l-200-20zM1340 780l80 30 60 10-80 20-80-10zM670 380l40-20-10 60-30 20zM850 860l80 40-60 20z"/>
                <path fill="url(#tex2)" transform="scale(2.800 1.704)" d="M80 0H560V700H80z"/>
                <path fill="#f5f0e4" d="M420 30l40-10 20 50-50-10zM475 120l20 10 0 30-15-5zM520 95l20 20 5 40-20-20zM500 200l55-20 0 12-40 15zM1540 738l-50 8 5 10z"/>
              </g>
              <path class="bd" d="M790 20L750 40 735 60 630 70 610 90 615 115 588 120 660 185 665 250 640 255 665 290 700 350 735 385 680 440 665 458M735 60L775 40 790 75 850 85 845 110 820 155 870 140 920 145 970 122 1030 130 1060 165 1065 200 1110 235 1105 280 1050 283 960 288 905 320 910 350 940 395M860 20L920 25 960 45 1040 40 1065 75 1005 85 1120 130 1190 185 1235 225 1240 265M1105 280L1130 300 1225 305 1240 330 1235 365 1160 385 1125 400 1140 420 1100 420 1040 442M763 600L770 588 820 605 830 625 870 622 885 605M1362 770L1425 815 1510 808 1540 795"/>
            </g>
            <path d="M0 486H2800" stroke="#8c5a7a" stroke-width="2" stroke-dasharray="13 4"/>
            <g transform="translate(-500 -712) scale(2.142857)">
              <g transform="translate(0 4.500)" class="country">
                <text x="269" y="339" class="end">Mauritania</text><text x="252" y="448" class="end">Guinea</text><text x="257" y="468" class="end">Leone</text><text x="267" y="492" class="end">Liberia</text>
                <text x="446.500" y="371">Niger</text><text x="545.500" y="398">Chad</text><text x="669.500" y="383">Sudan</text><text x="759.500" y="394">Eritrea</text><text x="852.500" y="389">Yaman</text><text x="943" y="336">Oman</text>
                <text x="328.500" y="421">Burkina</text><text x="328.500" y="434">Faso</text><text x="371.500" y="446">Benin</text><text x="357.500" y="467">Togo</text><text x="334.500" y="480">Ghana</text><text x="433" y="457">Nigeria</text>
                <text x="565" y="476">Republik</text><text x="565" y="489">Afrika</text><text x="565" y="502">Tengah</text><text x="664.500" y="479">Sudan Sel.</text><text x="768" y="467">Etiopia</text><text x="799" y="434">Djibouti</text><text x="827" y="529">Somalia</text>
                <text x="482.500" y="499">Kamerun</text><text x="458.500" y="536">Guinea</text><text x="458.500" y="549">Khatulistiwa</text><text x="464" y="565">Gabon</text><text x="515" y="565">Kongo</text><text x="690" y="543">Uganda</text><text x="750" y="554">Kenya</text>
                <text x="598" y="576">Republik</text><text x="598" y="590">Demokratik</text><text x="598" y="603">Kongo</text><text x="665" y="580">Rwanda</text><text x="665" y="597">Burundi</text><text x="718.500" y="628">Tanzania</text><text x="533.500" y="691">Angola</text><text x="642" y="703.500">Zambia</text><text x="711" y="704.500">Malawi</text><text x="725" y="746">Mozambik</text>
                <text x="1204.500" y="478">Sri Lanka</text><text x="1372" y="333">(Burma)</text><text x="1435.500" y="347">Laos</text><text x="1420" y="384.500">Thailand</text><text x="1496" y="403">Vietnam</text><text x="1461" y="423">Kamboja</text><text x="1430.500" y="502">Malaysia</text><text x="1449.500" y="545">Singapura</text>
              </g>
              <g transform="translate(0 3.900)" class="city">
                <text x="262.500" y="414">Bamako</text><text x="304.500" y="512">Abidjan</text><text x="378.500" y="504">Lomé</text><text x="402.500" y="490">Lagos</text><text x="496" y="518">Yaoundé</text><text x="693" y="566">Kampala</text><text x="738.500" y="582.500">Nairobi</text><text x="797.500" y="593">Mombasa</text><text x="764.500" y="641">Darussalam</text><text x="487.500" y="643.500">Luanda</text><text x="625" y="725">Lusaka</text><text x="659" y="751">Harare</text>
                <text x="1121" y="344">Mumbai</text><text x="1180.500" y="362">Haiderabad</text><text x="1199.500" y="410">Chennai</text><text x="1142.500" y="420">Bengaluru</text><text x="1131.500" y="442">Coimbatore</text><text x="1388" y="406">Bangkok</text><text x="1369" y="417" textLength="84" lengthAdjust="spacingAndGlyphs">กรุงเทพมหานคร</text><text x="1483" y="438" class="start">Kota Ho</text><text x="1483" y="449" class="start">Chi Minh</text><text x="1427" y="516">Kuala Lumpur</text><text x="1462" y="615.500" class="start">Jakarta</text><text x="1521" y="628" class="start">Surabaya</text><text x="1521" y="335" class="start">深圳市</text>
              </g>
              <g transform="translate(0 3.700)" class="water">
                <text x="756.500" y="339.500">Laut Merah</text><text x="856.500" y="425.500">Tlk. Aden</text><text x="1030.500" y="428">Laut Arab</text><text x="1277" y="414">Tlk. Benggala</text><text x="1364" y="438">Laut Andaman</text><text x="1423.500" y="455.500">Tlk. Thailand</text><text x="387.500" y="519.500">Tlk. Guinea</text><text x="1513" y="613.500" class="start">Laut Jawa</text>
              </g>
              <g transform="translate(0 3.300)" class="state"><text x="1243.500" y="337">OR</text><text x="1131" y="394.500">GA</text><text x="1151.500" y="400.500">KA</text><text x="1187.500" y="399">AP</text><text x="1184" y="435.500">TN</text><text x="1163" y="459.500">KL</text></g>
            </g>
            <use href="#cap" x="62" y="196"/><use href="#cap" x="271.500" y="346"/><use href="#cap" x="505.500" y="398"/><use href="#cap" x="985" y="479"/><use href="#cap" x="1081.500" y="515"/><use href="#cap" x="544.500" y="687"/><use href="#cap" x="887" y="841"/><use href="#cap" x="951" y="897"/><use href="#cap" x="2531" y="170"/><use href="#cap" x="2558" y="414"/><use href="#cap" x="2675" y="627"/><use href="#cap" x="2652" y="-4"/>
            <use href="#town" x="153" y="365"/><use href="#town" x="321" y="337"/><use href="#town" x="1147" y="578"/><use href="#town" x="1138" y="641"/><use href="#town" x="1902" y="44"/><use href="#town" x="2030" y="84"/><use href="#town" x="2010" y="188"/><use href="#town" x="2071" y="186"/><use href="#town" x="1995" y="234"/><use href="#town" x="2670" y="238"/>
            <g class="logo"><text x="20" y="885" textLength="112" lengthAdjust="spacingAndGlyphs"><tspan fill="#4285f4">G</tspan><tspan fill="#ea4335">o</tspan><tspan fill="#fbbc05">o</tspan><tspan fill="#4285f4">g</tspan><tspan fill="#34a853">l</tspan><tspan fill="#ea4335">e</tspan></text></g>
          </svg>
          <div class="types"><span class="on">Peta</span><span>Satelit</span></div>
          <div class="ctl full"><svg width="36" height="36"><path fill="none" stroke="#666" stroke-width="4" d="M12 2H2v10M24 2h10v10M12 34H2V24M24 34h10V24"/></svg></div>
          <div class="ctl peg"><svg width="36" height="62" viewBox="0 0 36 62"><g fill="#fbbc2c" stroke="#8a7b55" stroke-width="1.200"><path d="M8 21h19l3 3 5 16-5 3-3-9-1 26h-7V48h-3v12H9L8 34l-3 9-5-3 5-16z"/><ellipse cx="17.500" cy="11.500" rx="10.500" ry="10.500"/></g><path fill="#e07b30" d="M11 21h12l-5.500 9z"/></svg></div>
          <div class="ctl zoom"><svg width="36" height="36"><path fill="#666" d="M14 0h8v14h14v8H22v14h-8V22H0v-8h14z"/></svg><hr><svg width="36" height="36"><path fill="#666" d="M0 14h36v8H0z"/></svg></div>
          <div class="attrib"><span>Pintasan keyboard</span><span>Data peta ©2024 Google, INEGI</span><span>Persyaratan</span></div>
        </div>
        <div class="list">
          <h3>Project Lists</h3>
          <div class="tools">
            <span>Show</span><div class="length"><span>10</span><svg class="arrow"><use href="#i-down"/></svg></div><span>entries</span>
            <label>Search:</label><input class="filter" type="text">
          </div>
          <table>
            <colgroup><col class="c1"><col class="c2"><col class="c3"><col class="c4"><col class="c5"><col></colgroup>
            <thead><tr><th>#</th><th>Project Code</th><th>Project Name</th><th>Status</th><th>Site Supervisor</th><th>Location</th></tr></thead>
            <tbody>
              <tr><td>1</td><td>V0939</td><td>PG_M&amp;P_1849/2019_033_KLT</td><td>Work In Progress</td><td></td><td>No Location</td></tr>
              <tr><td>2</td><td>V0938</td><td>P&amp;G _M&amp;P_1849/2019_039_KLP</td><td>Work In Progress</td><td></td><td>No Location</td></tr>
              <tr><td>3</td><td>V0895</td><td>PG_M&amp;P_1849/2019_029_PJ</td><td>Work In Progress</td><td></td><td>No Location</td></tr>
              <tr><td>4</td><td>V0869</td><td>PG_M&amp;P_1849/2019_024_MLK</td><td>Work In Progress</td><td></td><td>No Location</td></tr>
              <tr><td>5</td><td>V0867</td><td>PG_M&amp;P_1849/2019_023_KLS</td><td>Work In Progress</td><td></td><td>No Location</td></tr>
              <tr class="tall"><td>6</td><td>V0866</td><td>PG_M&amp;P_1849/2019_022_SA</td><td>Work In Progress</td><td>Zulhelmi Fitri Bin Husin</td><td>No Location</td></tr>
              <tr><td>7</td><td>V0857</td><td>PG_M&amp;P_1849/2019_021_KL</td><td>Work In Progress</td><td></td><td>No Location</td></tr>
              <tr class="tall"><td>8</td><td>T3301</td><td>33KV_ABC_BULK_KELANTAN</td><td>Work In Progress</td><td>Mohd Fariss Bin Ibrahim</td><td>No Location</td></tr>
              <tr><td>9</td><td>V0822</td><td>PG_M&amp;P_1849/2019</td><td>Work In Progress</td><td></td><td>No Location</td></tr>
              <tr><td>10</td><td>V0772</td><td>PG_M&amp;P_1849/2019_011</td><td>Work In Progress</td><td></td><td>No Location</td></tr>
            </tbody>
          </table>
          <div class="foot"><span>Showing 1 to 10 of 23 entries</span>
            <div class="pages"><a>&lt;</a><a class="on">1</a><a>2</a><a>3</a><a>&gt;</a></div></div>
        </div>
      </div>
    </div>
  </section>
  <footer class="footer"><b>Copyright</b> Jati Tinggi Holding Sdn Bhd ©</footer>
</main>
</body>
</html>
```
FILE: styles.css
```css
* { box-sizing: border-box; }
body { margin: 0; display: flex; width: 3360px; height: 2948px; overflow: hidden; background: #f3f3f4; font-family: "Liberation Sans", Arial, sans-serif; font-size: 26px; line-height: 37.14px; color: #676a6c; }
.defs { position: absolute; }
svg { display: block; fill: currentColor; flex: none; }
button { border: 0; font: inherit; color: #fff; background: #1cb394; border-radius: 6px; }
h2, h3, h5 { margin: 0; }
.snug { letter-spacing: -.17px; }
.roomy { letter-spacing: .45px; }

.sidebar { width: 440px; background: #2f4050; color: #a7b1c2; font-weight: 700; }
.profile { position: relative; height: 225px; padding: 79px 50px 0; }
.profile-bg { position: absolute; inset: 0; width: 440px; height: 225px; }
.profile-name { position: relative; color: #dfe4ed; }
.profile-role { position: relative; display: flex; align-items: center; margin-top: 5px; font-weight: 400; color: #8095a8; }
.caret { margin: 3px 0 0 12px; border: 8px solid transparent; border-top-color: #8095a8; border-bottom: 0; }
.item { display: flex; align-items: center; height: 97.7px; padding: 1px 40px 0 50px; white-space: nowrap; }
.item > svg { height: 26px; margin-right: 19.2px; }
.item > svg.gap2 { margin-right: 20.800px; }
.item > svg.chev { width: 10px; height: 18px; margin: -5px 0 0 auto; }
.item > svg.chev-down { width: 16px; height: 10px; margin: -5px 0 0 auto; }
.w15 { width: 14.9px; } .w17 { width: 16.7px; } .w20 { width: 20.4px; } .w22 { width: 22.3px; } .w24 { width: 24.1px; }
.w26 { width: 26px; } .w28 { width: 27.9px; } .w30 { width: 29.7px; } .w32 { width: 32px; }
.noicon { padding-left: 69px; }
.active { height: 326px; background: #293846; border-left: 8px solid #19aa8d; color: #fff; letter-spacing: -.2px; }
.active .item > svg:first-child { margin-right: 18.600px; }
.sub { display: flex; align-items: center; height: 69.3px; padding: 1px 0 0 116px; color: #a7b1c2; }
.sub.on { color: #fff; }

.page { flex: 1; display: flex; flex-direction: column; }
.topbar { display: flex; align-items: center; height: 127px; padding: 0 70px 2px 40px; border-bottom: 2px solid #e7eaec; color: #888; }
.toggle { display: flex; align-items: center; justify-content: center; width: 76px; height: 65px; margin-top: -2px; }
.welcome { margin: 2px 0 0 auto; letter-spacing: -.1px; }
.bell { width: 26px; height: 28px; margin: 0 72px 0 49px; color: #999c9e; }
.logout { margin-top: 1px; font-size: 28px; font-weight: 700; color: #999c9e; }
.heading { height: 202px; padding: 40px 50px 0; background: #fff; border-bottom: 2px solid #e7eaec; }
h2 { margin-left: -2px; font: 100 48px/60px Inter, sans-serif; letter-spacing: -2.300px; }
.crumbs { display: flex; margin-top: 22px; }
.crumbs i { margin: 0 18px; font-style: normal; color: #ccc; }
.content { padding: 40px 50px 0; }
.card { height: 2449px; background: #fff; border-top: 4px solid #e7eaec; }
h5 { height: 94px; padding-left: 30px; border-bottom: 2px solid #e7eaec; font-size: 28px; line-height: 92px; letter-spacing: -.2px; }
.card-body { padding: 30px 10px 0; }
.form { display: grid; grid-template-columns: 263px 1107px 293px 1107px; line-height: 69px; }
.form label { padding-right: 60px; text-align: right; font-weight: 700; }
.form label b { color: #f00; }
.select, .date, .length { display: flex; align-items: center; justify-content: space-between; height: 72px; border: 2px solid #e5e6e7; border-radius: 2px; font-size: 28px; background: #fff; }
.select { padding: 2px 8px 0 32px; }
.date { padding-left: 24px; }
.arrow { width: 17px; height: 11px; }
.date i { display: flex; align-items: center; justify-content: center; width: 77px; height: 68px; border-left: 2px solid #e5e6e7; }
.date i svg { width: 26px; height: 28px; }
.search { display: flex; align-items: center; justify-content: center; gap: 8px; width: 174px; height: 73px; margin: 30px 0 40px 258px; padding: 0; font-size: 28px; letter-spacing: -.15px; }
.search svg { width: 26px; height: 26px; }

.map { position: relative; width: 2800px; height: 900px; overflow: hidden; font-family: Roboto, sans-serif; }
.canvas text { text-anchor: middle; paint-order: stroke; stroke-linejoin: round; font-family: Roboto, "Noto Sans", "Noto Sans CJK SC", sans-serif; }
.canvas text.end { text-anchor: end; }
.canvas text.start { text-anchor: start; }
.country text { font-size: 13px; font-weight: 700; fill: #1b1e22; stroke: rgba(255,255,255,.72); stroke-width: 3px; }
.city text { font-size: 11.200px; font-weight: 500; fill: #202124; stroke: rgba(255,255,255,.66); stroke-width: 2.800px; }
.water text { font-size: 10.200px; letter-spacing: .15px; fill: #1a5fc4; }
.state text { font-size: 9.300px; letter-spacing: .6px; fill: #5a5d62; stroke: rgba(255,255,255,.6); stroke-width: 2.500px; }
.canvas .logo text { text-anchor: start; font-size: 37px; font-weight: 500; stroke: rgba(255,255,255,.7); stroke-width: 4px; }
.lines path { vector-effect: non-scaling-stroke; }
.bd { fill: none; stroke: #686b6f; stroke-width: 1.500px; }
.dash { stroke-dasharray: 9 6; }
.st { fill: none; stroke: #777; stroke-width: 1.500px; stroke-dasharray: 6 4; }
.types { position: absolute; left: 20px; top: 20px; display: flex; height: 80px; border-radius: 4px; background: #fff; box-shadow: 0 2px 6px rgba(0,0,0,.2); font-size: 36px; line-height: 80px; color: #565656; text-align: center; }
.types span { width: 169px; }
.types .on { width: 142px; border-right: 2px solid #eee; font-weight: 500; color: #000; }
.ctl { position: absolute; right: 20px; display: flex; flex-direction: column; align-items: center; justify-content: center; width: 80px; height: 80px; background: #fff; border-radius: 4px; box-shadow: 0 2px 6px rgba(0,0,0,.2); }
.full { top: 20px; }
.peg { top: 546px; }
.zoom { top: 690px; height: 162px; justify-content: space-between; padding: 22px 0; }
.zoom hr { width: 60px; height: 2px; margin: 0; border: 0; background: #e6e6e6; }
.attrib { position: absolute; right: 0; bottom: 0; display: flex; gap: 2px; height: 28px; font-size: 20px; line-height: 29px; color: #000; white-space: nowrap; }
.attrib span { padding-right: 2px; background: #d7e0f4; text-align: center; }
.attrib span:nth-child(1) { width: 187px; }
.attrib span:nth-child(2) { width: 300px; }
.attrib span:nth-child(3) { width: 128px; }

.list { padding: 52px 30px 0; }
h3 { font-size: 32px; line-height: 36px; }
.tools { display: flex; height: 60px; margin-top: 21px; line-height: 56px; }
.length { width: 150px; height: 60px; margin: 0 8px; padding: 8px 8px 0 33px; }
.length .arrow { margin-bottom: 8px; }
.tools label { margin-left: auto; }
.filter { width: 364px; height: 60px; margin: 0 10px 0 14px; border: 2px solid #e5e6e7; border-radius: 2px; }
table { width: 2740px; margin-top: 22px; table-layout: fixed; border-spacing: 0; }
.c1 { width: 70px; } .c2 { width: 232.500px; } .c3 { width: 621.500px; } .c4 { width: 332px; } .c5 { width: 667px; }
th, td { padding: 17px 16px 15px; text-align: left; vertical-align: top; white-space: nowrap; }
th { border-bottom: 2px solid #ddd; }
td { border-top: 2px solid #e7eaec; }
td:nth-child(3) { letter-spacing: -.35px; }
td:nth-child(4) { letter-spacing: -.12px; }
td:nth-child(6) { letter-spacing: .15px; }
.tall td { height: 93.140px; }
.foot { display: flex; justify-content: space-between; align-items: center; margin-top: 15px; }
.foot > span { margin-top: 11px; letter-spacing: .12px; }
.pages { display: flex; height: 57px; border: 2px solid #ddd; border-radius: 8px; overflow: hidden; }
.pages a { width: 56.500px; line-height: 54px; text-align: center; border-left: 2px solid #ddd; }
.pages a:first-child { border: 0; }
.pages .on { background: #f4f4f4; }
.footer { height: 84px; margin-top: auto; padding-left: 40px; background: #fff; border-top: 2px solid #e7eaec; line-height: 82px; letter-spacing: .15px; }
```
